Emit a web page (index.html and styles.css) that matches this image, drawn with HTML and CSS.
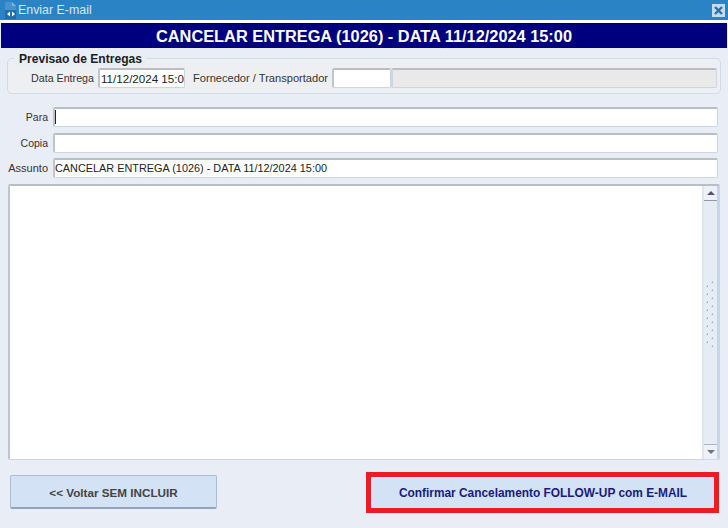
FILE: index.html
```html
<!DOCTYPE html>
<html lang="pt">
<head>
<meta charset="utf-8">
<title>Enviar E-mail</title>
<link rel="stylesheet" href="styles.css">
</head>
<body>
<div class="window">
  <header class="titlebar">
    <svg class="app-icon" width="13" height="17" viewBox="0 0 13 17">
      <path d="M1 0h7l4 4v13H1z" fill="#4a92cb"/>
      <path d="M8 0l4 4H8z" fill="#7db4de"/>
      <path d="M1 8h11v9H1z" fill="#1f6fae"/>
      <path d="M3 12l3-2.500v5zM11 12l-3-2.500v5z" fill="#fff"/>
    </svg>
    <span class="title-text">Enviar E-mail</span>
    <svg class="close-icon" width="13" height="13" viewBox="0 0 13 13">
      <rect width="13" height="13" fill="#c4dcf0"/>
      <path d="M3 3l7 7M10 3l-7 7" stroke="#2a6fa8" stroke-width="2.400"/>
    </svg>
  </header>
  <h1 class="banner">CANCELAR ENTREGA (1026) - DATA 11/12/2024 15:00</h1>
  <section class="group">
    <h2 class="group-title">Previsao de Entregas</h2>
    <div class="group-row">
      <span class="label label-date">Data Entrega</span>
      <div class="field field-date">11/12/2024 15:00</div>
      <span class="label label-supplier">Fornecedor / Transportador</span>
      <div class="field field-code"></div>
      <div class="field field-name"></div>
    </div>
  </section>
  <div class="form">
    <div class="row row-para">
      <span class="label row-label label-short">Para</span>
      <div class="field row-field"><span class="caret"></span></div>
    </div>
    <div class="row row-copia">
      <span class="label row-label label-short">Copia</span>
      <div class="field row-field"></div>
    </div>
    <div class="row row-assunto">
      <span class="label row-label">Assunto</span>
      <div class="field row-field">CANCELAR ENTREGA (1026) - DATA 11/12/2024 15:00</div>
    </div>
  </div>
  <div class="message">
    <div class="message-body"></div>
    <div class="scrollbar">
      <div class="scroll-btn scroll-up"><span class="arrow-up"></span></div>
      <div class="scroll-track">
        <svg class="grip" width="10" height="68" viewBox="0 0 10 68">
          <defs>
            <pattern id="dots" width="10" height="8" patternUnits="userSpaceOnUse">
              <path d="M0 5.500l2-1.500v1.500z" fill="#aebfd6"/>
              <path d="M5 1.500l2-1.500v1.500z" fill="#aebfd6"/>
              <rect x="1" y="5" width="1" height="1" fill="#8ea4c0"/>
              <rect x="6" y="1" width="1" height="1" fill="#8ea4c0"/>
            </pattern>
          </defs>
          <rect width="10" height="68" fill="url(#dots)"/>
        </svg>
      </div>
      <div class="scroll-btn scroll-down"><span class="arrow-down"></span></div>
    </div>
  </div>
  <footer class="actions">
    <button class="btn btn-back" type="button">&lt;&lt; Voltar SEM INCLUIR</button>
    <div class="highlight">
      <button class="btn btn-confirm" type="button">Confirmar Cancelamento FOLLOW-UP com E-MAIL</button>
    </div>
  </footer>
</div>
</body>
</html>
```

FILE: styles.css
```css
* { box-sizing: border-box; }
html, body { margin: 0; padding: 0; }
body {
  width: 728px;
  height: 528px;
  overflow: hidden;
  background: #e9eef6;
  font-family: "Liberation Sans", Arial, sans-serif;
  font-size: 12px;
  color: #2b2b2b;
}
.window { display: flex; flex-direction: column; height: 528px; }
.titlebar {
  height: 23px;
  background: #2a83c4;
  border-bottom: 3px solid #fff;
  display: flex;
  align-items: center;
  padding: 0 3px 0 4px;
  color: #d5e8f6;
  font-size: 12.4px;
}
.app-icon { margin-right: 1px; flex: none; }
.title-text { flex: 1; }
.close-icon { flex: none; }
.banner {
  margin: 0 1px;
  height: 25px;
  background: #00007f;
  border-top: 1px solid #00006a;
  color: #fff;
  font-size: 16.35px;
  font-weight: bold;
  line-height: 25px;
  text-align: center;
}
.group {
  margin: 10px 7px 0 7px;
  height: 36px;
  border: 1px solid #cfdbe9;
  border-radius: 5px;
  background: #eeeff2;
  padding: 0 3px 0 0;
}
.group-title {
  margin: -7px 0 0 6px;
  padding: 0 5px;
  display: table;
  height: 14px;
  background: #e9eef6;
  font-size: 12.100px;
  line-height: 14px;
  font-weight: bold;
  color: #1c1c1c;
}
.group-row { display: flex; align-items: center; margin-top: 2px; }
.label { font-size: 11px; color: #333; white-space: nowrap; }
.label-date { margin-left: 23px; font-size: 10.700px; }
.label-supplier { margin-left: 8px; font-size: 11.100px; }
.label-short { font-size: 10.500px; }
.field {
  height: 20px;
  background: #fff;
  border: 1px solid #c9d6e5;
  border-top: 2px solid #b9bec6;
  border-left: 2px solid #bfc5ce;
  border-radius: 2px;
  font-size: 10.880px;
  line-height: 17px;
  color: #222;
  white-space: nowrap;
  overflow: hidden;
}
.field-date { width: 87px; margin-left: 4px; padding-left: 1px; font-size: 11.600px; }
.field-code { width: 59px; margin-left: 4px; }
.field-name { flex: 1; background: #e9e9e9; border-left-color: #c9d6e5; }
.form { margin-top: 13px; display: flex; flex-direction: column; }
.row { display: flex; align-items: center; height: 20px; padding-right: 10px; }
.row-copia { margin-top: 6px; }
.row-assunto { margin-top: 5px; }
.row-label { width: 48px; text-align: right; }
.row-field { flex: 1; margin-left: 5px; }
.caret { display: block; width: 1px; height: 14px; margin: 1px 0 0 0; background: #222; }
.message {
  margin: 6px 8px 0 8px;
  height: 276px;
  display: flex;
  background: #fff;
  border: 1px solid #c9d6e5;
  border-top: 2px solid #b9bec6;
  border-left: 2px solid #bfc5ce;
  border-radius: 2px;
}
.message-body { flex: 1; }
.scrollbar {
  width: 17px;
  display: flex;
  flex-direction: column;
  background: #e6ecf4;
  border-left: 2px solid #dde6f1;
  border-right: 2px solid #c3d5ea;
}
.scroll-btn {
  height: 15px;
  display: flex;
  align-items: center;
  justify-content: center;
  background: #eef2f8;
}
.scroll-up { border-bottom: 1px solid #8d9aaa; }
.scroll-down { border-top: 1px solid #aab6c4; }
.arrow-up, .arrow-down { width: 0; height: 0; border-left: 4px solid transparent; border-right: 4px solid transparent; }
.arrow-up { border-bottom: 4px solid #4a5570; }
.arrow-down { border-top: 4px solid #6b7488; }
.scroll-track { flex: 1; display: flex; align-items: center; justify-content: center; padding-bottom: 16px; }
.grip { margin-left: 1px; }
.actions {
  display: flex;
  justify-content: space-between;
  align-items: flex-start;
  padding: 12px 9px 0 10px;
}
.btn {
  display: block;
  height: 34px;
  font-family: "Liberation Sans", Arial, sans-serif;
  font-size: 12px;
  font-weight: bold;
  background: #d3e3f5;
  border: 1px solid #a9bdd3;
  border-bottom: 2px solid #8ea6c2;
  border-radius: 2px;
  padding: 0;
}
.btn-back { width: 207px; margin-top: 3px; color: #444; font-size: 11.700px; padding-top: 2px; }
.highlight { width: 353px; height: 41px; border: 5px solid #ed1c24; }
.btn-confirm {
  width: 100%;
  height: 31px;
  color: #1a1a80;
  font-size: 11.900px;
  border: none;
  border-top: 1px solid #eef3fa;
  border-left: 1px solid #eef3fa;
  border-radius: 0;
}
```
